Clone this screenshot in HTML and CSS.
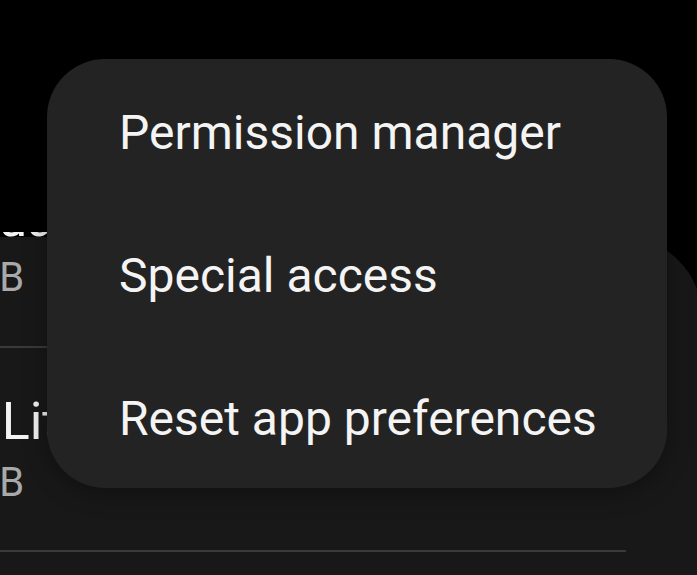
FILE: index.html
```html
<!DOCTYPE html>
<html lang="en">
<head>
<meta charset="utf-8">
<title>Apps menu</title>
<link rel="stylesheet" href="styles.css">
</head>
<body>
<div class="screen">
  <div class="header">
    <div class="peek"><div class="peek-text">Manual</div></div>
  </div>
  <div class="card">
    <div class="row row-first">
      <div class="size">12.34 MB</div>
    </div>
    <div class="row">
      <div class="name">Facebook Lite</div>
      <div class="size">12.34 MB</div>
    </div>
    <div class="row">
      <div class="name">Files</div>
      <div class="size">12.34 MB</div>
    </div>
  </div>
  <div class="menu">
    <div class="menu-item">Permission manager</div>
    <div class="menu-item">Special access</div>
    <div class="menu-item">Reset app preferences</div>
  </div>
</div>
</body>
</html>
```
FILE: styles.css
```css
html, body {
  margin: 0;
  padding: 0;
  background: #000;
}
body {
  width: 697px;
  height: 575px;
  overflow: hidden;
  font-family: Roboto, "Noto Sans", sans-serif;
}
.screen {
  position: relative;
  width: 697px;
  height: 575px;
  overflow: hidden;
}
.header {
  height: 237px;
  box-sizing: border-box;
  padding-top: 232px;
}
.peek {
  height: 5px;
  overflow: hidden;
}
.peek-text {
  font-size: 52px;
  line-height: 52px;
  margin-top: -39px;
  margin-left: -104px;
  color: #f4f4f4;
  white-space: nowrap;
}
.card {
  background: #181818;
  margin-right: -5px;
  border-top-right-radius: 80px;
  padding: 17px 76px 0 0;
  height: 400px;
}
.row {
  padding: 44px 0 43px;
  border-bottom: 2px solid #3a3a3a;
  white-space: nowrap;
}
.row-first {
  padding-top: 0;
  padding-bottom: 44px;
}
.name {
  font-size: 52px;
  line-height: 60px;
  color: #f4f4f4;
  margin-left: -237px;
  margin-bottom: 7px;
}
.size {
  font-size: 40px;
  line-height: 48px;
  color: #a9a9a9;
  margin-left: -146px;
}
.menu {
  position: absolute;
  left: 47px;
  top: 59px;
  width: 620px;
  height: 429px;
  background: #232323;
  border-radius: 58px;
  box-shadow: 0 4px 24px rgba(0, 0, 0, 0.35);
}
.menu-item {
  padding: 46px 0 41px 72px;
  font-size: 48px;
  line-height: 56px;
  color: #f4f4f4;
  white-space: nowrap;
}
```
